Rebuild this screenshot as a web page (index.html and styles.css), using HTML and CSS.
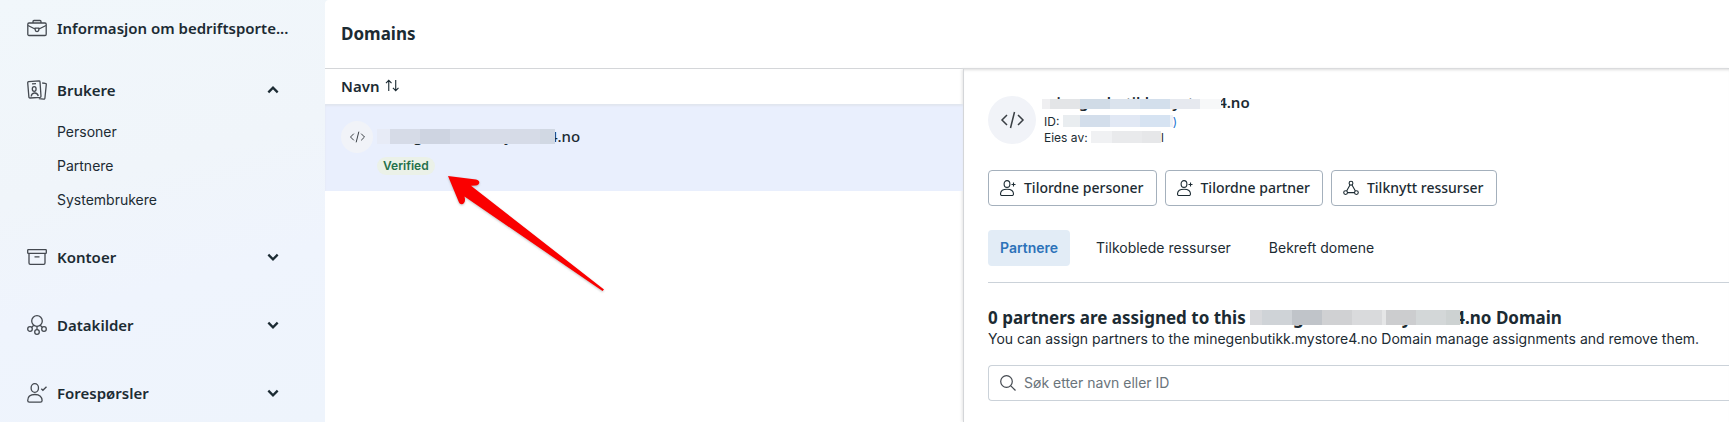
FILE: index.html
```html
<!DOCTYPE html>
<html lang="no">
<head>
    <meta charset="UTF-8">
    <meta name="viewport" content="width=device-width, initial-scale=1.0">
    <title>Domains</title>
    <link rel="stylesheet" href="styles.css">
</head>
<body>
    <nav class="sidebar">
        <a class="nav-item" href="#">
            <svg class="nav-icon" viewBox="0 0 20 20"><rect x=".8" y="5" width="18.400" height="12.500" rx="1.200"/><path d="M6 5V3.500a1 1 0 0 1 1-1h6a1 1 0 0 1 1 1V5M1 7.500 8 11M19 7.500 12 11M8.200 10.200h3.600v1.600a1.800 1.800 0 0 1-3.600 0z"/></svg>
            <span class="nav-label">Informasjon om bedriftsporte...</span>
        </a>
        <button class="nav-item" type="button" aria-expanded="true">
            <svg class="nav-icon" viewBox="0 0 20 20"><path d="M1.600 1.700 12 .8a1 1 0 0 1 1 .9l1 14.600a1 1 0 0 1-.9 1L3 18a1 1 0 0 1-1.100-.9L.7 2.700a1 1 0 0 1 .9-1zM15.200 3l3.200.4a1 1 0 0 1 .9 1.100l-1.400 13.800a1 1 0 0 1-1.100.9l-5-.6M5 3.900l4-.3M4.200 16.500c.2-2.300 1.200-3.300 3.200-3.500s3.400 1 3.900 3"/><ellipse cx="7.200" cy="9" rx="1.900" ry="2.400"/></svg>
            <span class="nav-label">Brukere</span>
            <svg class="chevron" viewBox="0 0 12 12"><path d="M2 8l4-4 4 4"/></svg>
        </button>
        <ul class="subnav">
            <li><a href="#">Personer</a></li>
            <li><a href="#">Partnere</a></li>
            <li><a href="#">Systembrukere</a></li>
        </ul>
        <button class="nav-item" type="button">
            <svg class="nav-icon" viewBox="0 0 20 20"><rect x=".7" y="2.700" width="18.600" height="3.600" rx=".6"/><path d="M2 6.300V16a1.300 1.300 0 0 0 1.300 1.300h13.400A1.300 1.300 0 0 0 18 16V6.300M7.500 9.800h5"/></svg>
            <span class="nav-label">Kontoer</span>
            <svg class="chevron" viewBox="0 0 12 12"><path d="M2 4l4 4 4-4"/></svg>
        </button>
        <button class="nav-item" type="button">
            <svg class="nav-icon" viewBox="0 0 20 20"><circle cx="10" cy="6" r="5.300"/><circle cx="3" cy="14" r="2.300"/><circle cx="17" cy="14" r="2.300"/><circle cx="10" cy="17" r="2.300"/><path d="M6.800 10.200 4.700 12.400M13.200 10.200l2.100 2.200M10 11.300v3.400"/></svg>
            <span class="nav-label">Datakilder</span>
            <svg class="chevron" viewBox="0 0 12 12"><path d="M2 4l4 4 4-4"/></svg>
        </button>
        <button class="nav-item" type="button">
            <svg class="nav-icon" viewBox="0 0 20 20"><ellipse cx="7.800" cy="5" rx="3.700" ry="4.300"/><path d="M.7 17.500c0-3.600 2.300-6 7.200-6s7.200 2.400 7.200 6c0 1.100-.6 1.700-1.700 1.700H2.400c-1.100 0-1.700-.6-1.700-1.700zM14.300 5.700l1.600 1.600 3.600-3.600"/></svg>
            <span class="nav-label">Forespørsler</span>
            <svg class="chevron" viewBox="0 0 12 12"><path d="M2 4l4 4 4-4"/></svg>
        </button>
    </nav>

    <main class="main">
        <header class="page-header">
            <h1>Domains</h1>
        </header>
        <div class="columns">
            <section class="list">
                <div class="list-header">
                    <span>Navn</span>
                    <svg class="sort-icon" viewBox="0 0 16 14"><path d="M4.500 13V1.500M1.500 4.500l3-3 3 3M12 1v11.500M9 9.500l3 3 3-3"/></svg>
                </div>
                <div class="list-row">
                    <span class="avatar avatar-small">
                        <svg viewBox="0 0 24 18"><path d="M6.500 4 1.500 9l5 5M17.500 4l5 5-5 5M14 1l-4 16"/></svg>
                    </span>
                    <div class="list-text">
                        <span class="domain-name">minegenbutikk.mystore4.no<span class="mosaic mosaic-list"></span></span>
                        <span class="badge">Verified</span>
                    </div>
                </div>
                <svg class="arrow" viewBox="0 0 158 118"><path d="M1 1 29 4.500C34 5.500 33 10.500 28.500 10.500L24 10.700 157 114.500 155.500 116 17.500 21.500 18 24C18.500 29.500 13.500 31 11.800 27z"/></svg>
            </section>

            <section class="detail">
                <div class="profile">
                    <span class="avatar">
                        <svg viewBox="0 0 24 18"><path d="M6.500 4 1.500 9l5 5M17.500 4l5 5-5 5M14 1l-4 16"/></svg>
                    </span>
                    <div class="profile-text">
                        <h2 class="profile-name">minegenbutikk.mystore4.no<span class="mosaic mosaic-name"></span></h2>
                        <p>ID: <span class="mosaic-inline mosaic-id"></span><a href="#">)</a></p>
                        <p>Eies av: <span class="mosaic-inline mosaic-owner"></span>l</p>
                    </div>
                </div>
                <div class="actions">
                    <button class="btn" type="button">
                        <svg viewBox="0 0 16 16"><ellipse cx="7" cy="4" rx="2.900" ry="3.400"/><path d="M.5 14c0-3 2-4.800 6.500-4.800s6.500 1.800 6.500 4.800c0 .9-.5 1.500-1.400 1.500H1.900C1 15.500.5 14.900.5 14zM13.500 2.500v4M11.500 4.500h4"/></svg>
                        Tilordne personer
                    </button>
                    <button class="btn" type="button">
                        <svg viewBox="0 0 16 16"><ellipse cx="7" cy="4" rx="2.900" ry="3.400"/><path d="M.5 14c0-3 2-4.800 6.500-4.800s6.500 1.800 6.500 4.800c0 .9-.5 1.500-1.400 1.500H1.900C1 15.500.5 14.900.5 14zM13.500 2.500v4M11.500 4.500h4"/></svg>
                        Tilordne partner
                    </button>
                    <button class="btn" type="button">
                        <svg viewBox="0 0 16 16"><circle cx="8" cy="3.200" r="1.900"/><circle cx="2.600" cy="12.600" r="1.900"/><circle cx="13.400" cy="12.600" r="1.900"/><path d="M7 4.900 3.600 10.900M9 4.900l3.400 6M4.500 12.600h7"/></svg>
                        Tilknytt ressurser
                    </button>
                </div>
                <div class="tabs" role="tablist">
                    <button class="tab active" type="button" role="tab" aria-selected="true">Partnere</button>
                    <button class="tab" type="button" role="tab">Tilkoblede ressurser</button>
                    <button class="tab" type="button" role="tab">Bekreft domene</button>
                </div>
                <h2 class="assigned">0 partners are assigned to this <span class="assigned-domain">minegenbutikk.mystore4<span class="mosaic mosaic-heading"></span></span>.no Domain</h2>
                <p class="description">You can assign partners to the minegenbutikk.mystore4.no Domain manage assignments and remove them.</p>
                <div class="search">
                    <svg viewBox="0 0 16 16"><circle cx="6.500" cy="6.500" r="5.800"/><path d="M10.800 10.800l4.700 4.700"/></svg>
                    <input type="text" placeholder="Søk etter navn eller ID" aria-label="Søk etter navn eller ID">
                </div>
            </section>
        </div>
    </main>
</body>
</html>
```
FILE: styles.css
```css
* {
    box-sizing: border-box;
}

body {
    margin: 0;
    min-height: 100vh;
    display: flex;
    overflow: hidden;
    font-family: Inter, sans-serif;
    font-size: 14px;
    line-height: 20px;
    color: #1c2b33;
    background: #f0f6fa;
}

h1, h2, p, ul {
    margin: 0;
    padding: 0;
}

button {
    font: inherit;
    color: inherit;
    background: none;
    border: none;
    cursor: pointer;
}

a {
    color: inherit;
    text-decoration: none;
}

svg {
    fill: none;
    stroke: currentColor;
    flex-shrink: 0;
}

/* Sidebar */
.sidebar {
    width: 325px;
    flex-shrink: 0;
    height: 100vh;
    overflow: hidden;
    padding: 6px 41px 0 27px;
    background: linear-gradient(165deg, #f1f7fb 0%, #f0f5fa 40%, #eff4fd 65%, #eef4fc 100%);
}

.nav-item {
    display: flex;
    align-items: center;
    gap: 10px;
    width: 100%;
    height: 44px;
    margin-bottom: 24px;
    padding: 0 4px 0 0;
    font-family: "Noto Sans", sans-serif;
    font-size: 15px;
    font-weight: 600;
    text-align: left;
}

a.nav-item {
    margin-bottom: 18px;
    padding: 0;
}

.nav-label {
    flex: 1;
    white-space: nowrap;
}

.nav-icon {
    width: 20px;
    height: 20px;
    stroke: #444950;
    stroke-width: 1.3;
}

.chevron {
    width: 14px;
    height: 14px;
    stroke-width: 2;
}

.subnav {
    list-style: none;
    margin: -21px 0 18px 30px;
}

.subnav a {
    display: block;
    padding: 7px 0;
}

/* Main area */
.main {
    flex: 1;
    min-width: 0;
    display: flex;
    flex-direction: column;
    background: #fff;
    border-top-left-radius: 4px;
}

.page-header {
    padding: 22px 16px;
    border-bottom: 1px solid #d4d6d9;
}

h1 {
    font-family: "Noto Sans", sans-serif;
    font-size: 17px;
    font-weight: 700;
    line-height: 24px;
}

.columns {
    flex: 1;
    display: flex;
}

.list {
    position: relative;
    flex: 0 0 638px;
}

.list-header {
    display: flex;
    align-items: center;
    gap: 5px;
    height: 35px;
    padding: 0 16px 2px;
    font-family: "Noto Sans", sans-serif;
    font-weight: 600;
    font-size: 15px;
}

.sort-icon {
    width: 16px;
    height: 13px;
    stroke-width: 1.2;
}

.list-row {
    display: flex;
    gap: 4px;
    padding: 17px 16px 16px;
    background: #e9effd;
    box-shadow: inset 0 2px 2px #e1e5ef;
}

.list-text {
    display: flex;
    flex-direction: column;
    align-items: flex-start;
    gap: 11px;
    padding: 5px 0 0;
}

.domain-name {
    position: relative;
    font-family: "Noto Sans", sans-serif;
    font-size: 15px;
    font-weight: 500;
}

.badge {
    padding: 0 6px;
    border-radius: 9px;
    background: #ebf1e8;
    color: #24704b;
    font-size: 12px;
    font-weight: 600;
    line-height: 18px;
}

.avatar {
    display: flex;
    align-items: center;
    justify-content: center;
    width: 48px;
    height: 48px;
    border-radius: 50%;
    background: #f1f3f8;
    color: #3a3f44;
}

.avatar svg {
    width: 25px;
    height: 18px;
    stroke-width: 1.5;
}

.avatar-small {
    width: 32px;
    height: 32px;
}

.avatar-small svg {
    width: 17px;
    height: 12px;
}

/* Blurred-out pieces of names */
.mosaic {
    position: absolute;
    left: 0;
    top: 5px;
}

.mosaic-list {
    top: 3px;
    width: 178px;
    height: 15px;
    background: linear-gradient(90deg, #e7ebf6 13px, #d6dbe7 13px 43px, #ced4e1 43px 73px, #d5dbe8 73px 103px, #d7dce8 103px 133px, #d6dbe7 133px 163px, #d1d8e3 163px);
}

.mosaic-name {
    width: 179px;
    height: 10px;
    background: linear-gradient(90deg, #efeff1 8px, #e3e5e7 8px 38px, #d0dbe6 38px 68px, #dbe3ed 68px 98px, #d3dfec 98px 128px, #e6e9ef 128px 158px, #f7f8f9 158px);
}

.mosaic-heading {
    top: 4px;
    right: 5px;
    height: 15px;
    background: linear-gradient(90deg, #d8d9dc 12px, #cfd3d7 12px 42px, #c0c4c9 42px 72px, #d0d1d3 72px 102px, #d9dadc 102px 132px, #e5e6e7 132px 136px, #cccdcf 136px 166px, #d3d7d8 166px 196px, #cdd2d2 196px);
}

.mosaic-inline {
    display: inline-block;
    height: 12px;
    vertical-align: -1px;
}

.mosaic-id {
    width: 110px;
    background: linear-gradient(90deg, #e9edf0 17px, #d3deeb 17px 47px, #e1e8f4 47px 77px, #d6e3f2 77px 107px, #edf2f8 107px);
}

.mosaic-owner {
    width: 70px;
    background: linear-gradient(90deg, #f0f1f3 21px, #e9eaec 21px 51px, #e6e7e9 51px);
}

.arrow {
    position: absolute;
    left: 122px;
    top: 106px;
    width: 158px;
    height: 118px;
    fill: #fa0000;
    stroke: none;
    filter: drop-shadow(0 1px 1px #8888);
}

/* Detail panel */
.detail {
    flex: 1;
    min-width: 0;
    padding: 27px 0 0 24px;
    border-left: 1px solid #d4d6d9;
    box-shadow: inset 0 3px 3px -2px #ddd, -1px 0 3px #e4e4e4;
}

.profile {
    display: flex;
    gap: 8px;
    height: 48px;
}

.profile-text {
    margin-top: -2px;
}

.profile-name {
    position: relative;
    margin: 0 0 4px -2px;
    font-family: "Noto Sans", sans-serif;
    font-size: 15px;
    font-weight: 600;
    line-height: 16px;
}

.profile p {
    font-size: 12px;
    line-height: 16px;
}

.profile a {
    color: #2374cf;
}

.actions {
    display: flex;
    gap: 8px;
    margin-top: 26px;
}

.btn {
    display: flex;
    align-items: center;
    gap: 8px;
    height: 36px;
    padding: 0 12px 0 11px;
    border: 1px solid #a4b0bc;
    border-radius: 4px;
    font-family: "Noto Sans", sans-serif;
    font-weight: 500;
}

.btn svg {
    width: 16px;
    height: 16px;
    stroke-width: 1.1;
}

.tabs {
    display: flex;
    gap: 14px;
    margin-top: 24px;
    padding-bottom: 16px;
    border-bottom: 1px solid #cbd2d9;
}

.tab {
    height: 36px;
    padding: 0 12px;
    border-radius: 4px;
}

.tab.active {
    background: #e2ecf6;
    color: #2c72b9;
    font-weight: 600;
}

.assigned {
    margin-top: 24px;
    font-family: "Noto Sans", sans-serif;
    font-size: 17px;
    font-weight: 700;
    line-height: 22px;
    white-space: nowrap;
}

.assigned-domain {
    position: relative;
}

.description {
    white-space: nowrap;
}

.search {
    display: flex;
    align-items: center;
    gap: 8px;
    height: 36px;
    margin-top: 16px;
    padding-left: 11px;
    border: 1px solid #cbd2d9;
    border-right: none;
    border-radius: 4px 0 0 4px;
}

.search svg {
    width: 16px;
    height: 16px;
    color: #444950;
    stroke-width: 1.2;
}

.search input {
    flex: 1;
    padding: 0;
    border: none;
    outline: none;
    font: inherit;
    background: none;
}

.search input::placeholder {
    color: #6a747b;
}
```
